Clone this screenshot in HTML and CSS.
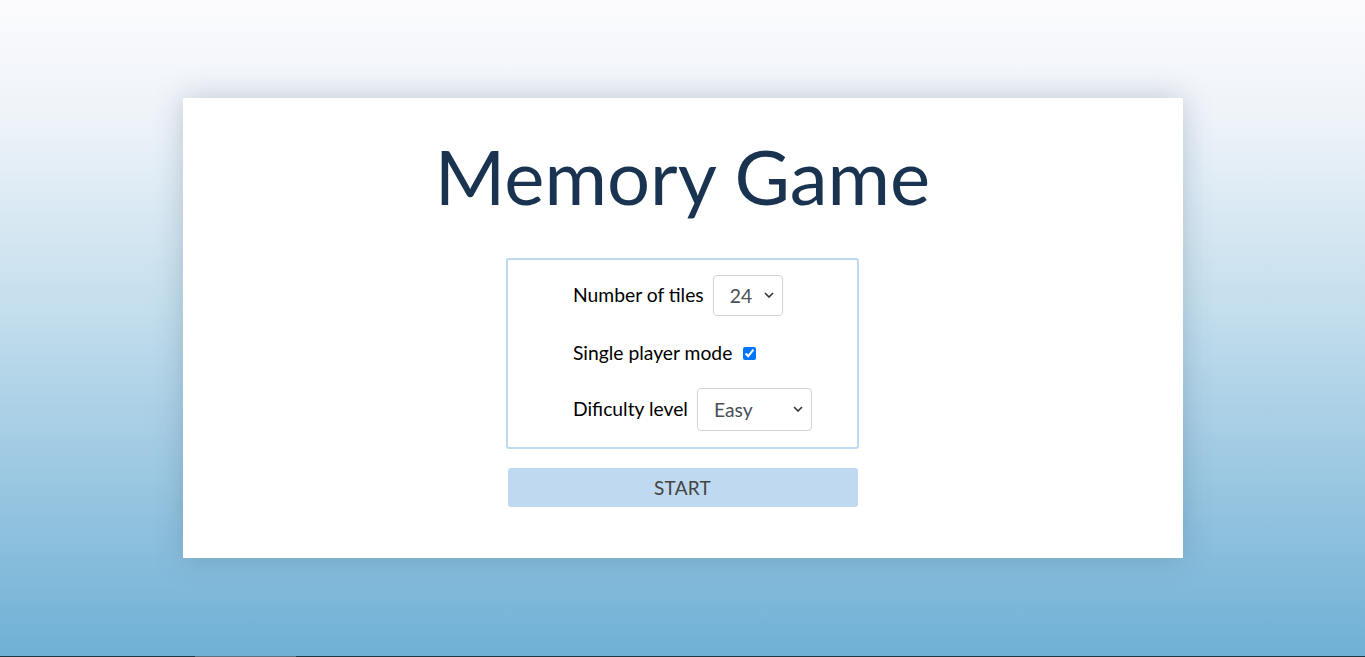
FILE: index.html
```html
<!DOCTYPE html>
<html lang="en">
<head>
<meta charset="utf-8">
<title>Memory Game</title>
<link rel="stylesheet" href="styles.css">
</head>
<body>
<main class="page">
  <section class="card">
    <h1 class="title">Memory Game</h1>
    <form class="settings">
      <div class="field">
        <label class="label" for="tiles">Number of tiles</label>
        <select id="tiles" class="select select-tiles">
          <option>24</option>
        </select>
      </div>
      <div class="field field-check">
        <label class="label" for="single">Single player mode</label>
        <input id="single" class="check" type="checkbox" checked>
      </div>
      <div class="field field-level">
        <label class="label" for="level">Dificulty level</label>
        <select id="level" class="select select-level">
          <option>Easy</option>
        </select>
      </div>
    </form>
    <button class="start" type="button">START</button>
  </section>
</main>
<div class="bottom-line"><span class="thumb"></span></div>
</body>
</html>
```

FILE: styles.css
```css
* { box-sizing: border-box; }
html, body { height: 100%; }
body {
  margin: 0;
  font-family: Lato, "Open Sans", sans-serif;
  color: #000;
  background: linear-gradient(to bottom, #fbfbfd 0%, #eef3f9 18%, #c7e0ee 45%, #9fcae3 70%, #6fb0d5 100%);
  display: flex;
  flex-direction: column;
}
.page {
  flex: 1;
  display: flex;
  justify-content: center;
  padding-top: 98px;
}
.card {
  width: 1000px;
  height: 460px;
  background: #fff;
  box-shadow: 0 0 28px rgba(60, 90, 120, 0.28);
  display: flex;
  flex-direction: column;
  align-items: center;
  padding-top: 30px;
}
.title {
  margin: 0;
  font-weight: 400;
  font-size: 76px;
  line-height: 96px;
  color: #1a3350;
}
.settings {
  margin-top: 34px;
  width: 353px;
  height: 191px;
  border: 2px solid #bcd9ef;
  border-radius: 3px;
  padding: 15px 0 0 65px;
  display: flex;
  flex-direction: column;
}
.field {
  display: flex;
  align-items: center;
  height: 40px;
}
.field-check {
  height: 38px;
  margin-top: 19px;
}
.field-level {
  height: 42px;
  margin-top: 16px;
}
.label {
  font-size: 19.3px;
  line-height: 24px;
}
.select {
  appearance: none;
  -webkit-appearance: none;
  font-family: inherit;
  font-size: 19.3px;
  color: #495057;
  background: #fff url("data:image/svg+xml,%3Csvg xmlns='http://www.w3.org/2000/svg' width='10' height='6' viewBox='0 0 10 6'%3E%3Cpath d='M1 1l4 4 4-4' fill='none' stroke='%23333' stroke-width='1.6'/%3E%3C/svg%3E") no-repeat right 8px center;
  border: 1px solid #ced4da;
  border-radius: 4px;
  margin-left: 9px;
}
.select-tiles {
  width: 70px;
  height: 41px;
  padding: 0 0 0 16px;
}
.select-level {
  width: 115px;
  height: 43px;
  padding: 0 0 0 16px;
}
.check {
  margin: 0 0 0 11px;
  width: 13px;
  height: 13px;
  accent-color: #0075ff;
}
.start {
  margin-top: 19px;
  width: 350px;
  height: 39px;
  border: none;
  border-radius: 3px;
  background: #bfd9f0;
  color: #444;
  font-family: inherit;
  font-size: 19px;
  letter-spacing: 0.3px;
}
.bottom-line {
  height: 1px;
  background: #1d3946;
  position: relative;
}
.thumb {
  position: absolute;
  left: 195px;
  width: 101px;
  height: 1px;
  background: #5a7281;
}
```
